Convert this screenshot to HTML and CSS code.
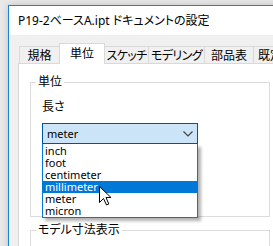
FILE: index.html
```html
<!DOCTYPE html>
<html lang="ja">
<head>
    <meta charset="UTF-8">
    <title>ドキュメントの設定</title>
    <link rel="stylesheet" href="styles.css">
</head>
<body>

<div class="window">
    <div class="titlebar">P19-2ベースA.ipt ドキュメントの設定</div>

    <div class="dialog">
        <div class="tabs">
            <div class="tab tab-std">規格</div>
            <div class="tab tab-unit active">単位</div>
            <div class="tab tab-sketch">スケッチ</div>
            <div class="tab tab-model">モデリング</div>
            <div class="tab tab-bom">部品表</div>
            <div class="tab tab-more">既定</div>
        </div>

        <div class="panel">
            <fieldset class="group group-units">
                <legend>単位</legend>
                <div class="field-label">長さ</div>
                <div class="combo">
                    <div class="combo-box">
                        <span>meter</span>
                        <svg class="chevron" width="10" height="6" viewBox="0 0 10 6">
                            <polyline points="0.5,0.5 5,5 9.5,0.5" fill="none" stroke="#404040" stroke-width="1.1"/>
                        </svg>
                    </div>
                    <ul class="combo-list">
                        <li>inch</li>
                        <li>foot</li>
                        <li>centimeter</li>
                        <li class="selected">millimeter</li>
                        <li>meter</li>
                        <li>micron</li>
                    </ul>
                    <svg class="cursor" width="13" height="20" viewBox="0 0 13 20">
                        <path d="M0.5,0.5 L0.5,16.5 L4.5,12.5 L7.5,19 L9.8,18 L7,11.5 L12,11.5 Z" fill="#fff" stroke="#000" stroke-width="1" stroke-linejoin="miter"/>
                    </svg>
                </div>
            </fieldset>

            <fieldset class="group group-dims">
                <legend>モデル寸法表示</legend>
            </fieldset>
        </div>
    </div>
</div>

</body>
</html>
```

FILE: styles.css
```css
body {
    margin: 0;
    background: #e9e9e9;
    font-family: "Segoe UI", "Noto Sans", "Noto Sans CJK JP", sans-serif;
    font-size: 12px;
    font-feature-settings: "palt";
    color: #000;
    overflow: hidden;
    height: 246px;
}

.window {
    margin: 5px 0 0 8px;
    width: 300px;
    height: 260px;
    border-top: 1px solid #1883d7;
    border-left: 1px solid #1883d7;
    background: #f0f0f0;
    box-shadow: 0 0 7px rgba(0, 0, 0, 0.18);
}

.titlebar {
    height: 29px;
    line-height: 29px;
    padding-left: 9px;
    background: #fff;
    white-space: nowrap;
}

.dialog {
    padding: 8px 0 0 9px;
}

.tabs {
    display: flex;
    align-items: flex-end;
    height: 20px;
    padding-left: 1px;
}

.tab {
    box-sizing: border-box;
    height: 17px;
    padding-top: 1px;
    line-height: 16px;
    text-align: center;
    border: 1px solid #d9d9d9;
    border-bottom: none;
    border-right: none;
    background: #f0f0f0;
    white-space: nowrap;
    overflow: hidden;
}

.tab-sketch, .tab-model {
    letter-spacing: -0.6px;
}

.tab.active {
    height: 21px;
    padding-top: 1px;
    line-height: 17px;
    margin-bottom: -1px;
    background: #fff;
    border-right: 1px solid #d9d9d9;
    position: relative;
}

.tab.active + .tab {
    border-left: none;
}

.tab-std { width: 40px; }
.tab-unit { width: 46px; }
.tab-sketch { width: 43px; }
.tab-model { width: 56px; }
.tab-bom { width: 49px; }
.tab-more { width: 40px; text-align: left; padding-left: 4px; }

.panel {
    box-sizing: border-box;
    width: 264px;
    height: 200px;
    background: #fff;
    border: 1px solid #d9d9d9;
    padding: 0 11px;
}

.group {
    margin: 10px 0 0;
    padding: 0 11px;
    border: 1px solid #dcdcdc;
    width: 240px;
    box-sizing: border-box;
}

.group legend {
    margin-left: -6px;
    padding: 0 2px;
    line-height: 16px;
}

.group-units {
    padding-bottom: 72px;
}

.group-dims {
    margin-top: 5px;
    height: 40px;
}

.field-label {
    margin-top: 9px;
    line-height: 16px;
}

.combo {
    position: relative;
    margin-top: 8px;
    width: 156px;
    font-size: 11px;
}

.combo-box {
    box-sizing: border-box;
    height: 21px;
    border: 1px solid #005499;
    background: #cce4f7;
    padding-left: 4px;
    line-height: 18px;
    display: flex;
    justify-content: space-between;
    align-items: center;
}

.chevron {
    margin-right: 4px;
}

.combo-list {
    position: absolute;
    top: 21px;
    left: 0;
    width: 156px;
    box-sizing: border-box;
    margin: 0;
    padding: 1px 0 0;
    list-style: none;
    background: #fff;
    border: 1px solid #0078d7;
    border-top: none;
    box-shadow: 3px 3px 3px rgba(0, 0, 0, 0.3);
}

.combo-list li {
    height: 12px;
    line-height: 12px;
    padding-left: 2px;
}

.combo-list li.selected {
    background: #0078d7;
    color: #fff;
}

.cursor {
    position: absolute;
    left: 57px;
    top: 63px;
}
```
